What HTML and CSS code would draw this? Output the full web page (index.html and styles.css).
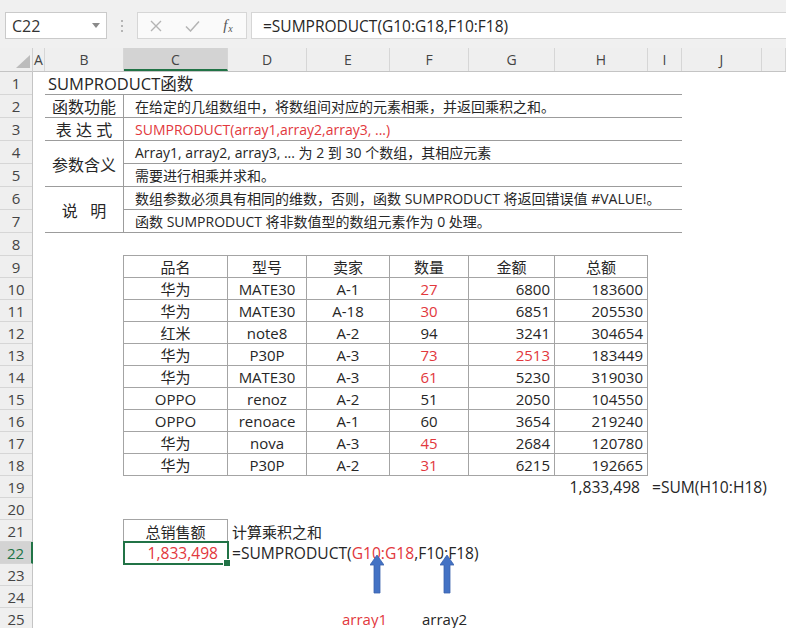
FILE: index.html
```html
<!DOCTYPE html>
<html lang="zh">
<head>
<meta charset="utf-8">
<title>SUMPRODUCT</title>
<link rel="stylesheet" href="styles.css">
</head>
<body>
<header class="topbar">
  <div class="namebox"><span>C22</span><svg class="caret" width="8" height="5" viewBox="0 0 8 5"><path d="M0 0H8L4 5Z" fill="#8a8a8a"/></svg></div>
  <div class="grip"><i></i><i></i><i></i></div>
  <div class="fxbox">
    <span class="slot"><svg width="12" height="12" viewBox="0 0 12 12"><path d="M1 1L11 11M11 1L1 11" stroke="#b4b4b4" stroke-width="1.4" fill="none"/></svg></span>
    <span class="slot"><svg width="15" height="12" viewBox="0 0 15 12"><path d="M1 6.5L5.5 11L14 1.5" stroke="#b4b4b4" stroke-width="1.5" fill="none"/></svg></span>
    <span class="slot fx"><i>f</i><small>x</small></span>
  </div>
  <div class="formula">=SUMPRODUCT(G10:G18,F10:F18)</div>
</header>

<main class="sheet">
  <div class="corner"><svg width="14" height="13" viewBox="0 0 14 13"><path d="M14 0V13H0Z" fill="#bcbcbc"/></svg></div>
  <div class="colheads">
    <div class="ch">A</div><div class="ch">B</div><div class="ch sel">C</div><div class="ch">D</div><div class="ch">E</div><div class="ch">F</div><div class="ch">G</div><div class="ch">H</div><div class="ch">I</div><div class="ch">J</div><div class="ch"></div>
  </div>
  <div class="rowheads">
    <div class="rh">1</div><div class="rh">2</div><div class="rh">3</div><div class="rh">4</div><div class="rh">5</div><div class="rh">6</div><div class="rh">7</div><div class="rh">8</div><div class="rh">9</div><div class="rh">10</div><div class="rh">11</div><div class="rh">12</div><div class="rh">13</div><div class="rh">14</div><div class="rh">15</div><div class="rh">16</div><div class="rh">17</div><div class="rh">18</div><div class="rh">19</div><div class="rh">20</div><div class="rh">21</div><div class="rh sel">22</div><div class="rh">23</div><div class="rh">24</div><div class="rh">25</div>
  </div>
  <div class="cells">
    <div class="title">SUMPRODUCT函数</div>
    <div class="info">
      <div class="lbl">函数功能</div><div class="txt">在给定的几组数组中，将数组间对应的元素相乘，并返回乘积之和。</div>
      <div class="lbl">表 达 式</div><div class="txt red">SUMPRODUCT(array1,array2,array3, ...)</div>
      <div class="lbl span2">参数含义</div><div class="txt">Array1, array2, array3, ... 为 2 到 30 个数组，其相应元素</div><div class="txt">需要进行相乘并求和。</div>
      <div class="lbl span2">说&nbsp;&nbsp;&nbsp;明</div><div class="txt">数组参数必须具有相同的维数，否则，函数 SUMPRODUCT 将返回错误值 #VALUE!。</div><div class="txt">函数 SUMPRODUCT 将非数值型的数组元素作为 0 处理。</div>
    </div>
    <div class="table">
      <div class="td">品名</div><div class="td">型号</div><div class="td">卖家</div><div class="td">数量</div><div class="td">金额</div><div class="td">总额</div>
      <div class="td">华为</div><div class="td">MATE30</div><div class="td">A-1</div><div class="td red">27</div><div class="td num">6800</div><div class="td num">183600</div>
      <div class="td">华为</div><div class="td">MATE30</div><div class="td">A-18</div><div class="td red">30</div><div class="td num">6851</div><div class="td num">205530</div>
      <div class="td">红米</div><div class="td">note8</div><div class="td">A-2</div><div class="td">94</div><div class="td num">3241</div><div class="td num">304654</div>
      <div class="td">华为</div><div class="td">P30P</div><div class="td">A-3</div><div class="td red">73</div><div class="td num red">2513</div><div class="td num">183449</div>
      <div class="td">华为</div><div class="td">MATE30</div><div class="td">A-3</div><div class="td red">61</div><div class="td num">5230</div><div class="td num">319030</div>
      <div class="td">OPPO</div><div class="td">renoz</div><div class="td">A-2</div><div class="td">51</div><div class="td num">2050</div><div class="td num">104550</div>
      <div class="td">OPPO</div><div class="td">renoace</div><div class="td">A-1</div><div class="td">60</div><div class="td num">3654</div><div class="td num">219240</div>
      <div class="td">华为</div><div class="td">nova</div><div class="td">A-3</div><div class="td red">45</div><div class="td num">2684</div><div class="td num">120780</div>
      <div class="td">华为</div><div class="td">P30P</div><div class="td">A-2</div><div class="td red">31</div><div class="td num">6215</div><div class="td num">192665</div>
    </div>
    <div class="cell latin total">1,833,498</div>
    <div class="cell latin totalf">=SUM(H10:H18)</div>
    <div class="cell boxhead">总销售额</div>
    <div class="cell note">计算乘积之和</div>
    <div class="cell latin selcell">1,833,498</div>
    <div class="cell latin fformula">=SUMPRODUCT(<span class="red">G10:G18</span>,F10:F18)</div>
    <svg class="arrow arrow1" width="14" height="39" viewBox="0 0 14 39"><path d="M7 0L14 10H10V38H4V10H0Z" fill="#4472c4" stroke="#3a63ad" stroke-width="0.8"/></svg>
    <svg class="arrow arrow2" width="14" height="39" viewBox="0 0 14 39"><path d="M7 0L14 10H10V38H4V10H0Z" fill="#4472c4" stroke="#3a63ad" stroke-width="0.8"/></svg>
    <div class="cell alabel1 red">array1</div>
    <div class="cell alabel2">array2</div>
  </div>
</main>
</body>
</html>
```
FILE: styles.css
```css
* { box-sizing: border-box; }
html, body { margin: 0; padding: 0; }
body {
  width: 786px;
  height: 628px;
  overflow: hidden;
  background: #fff;
  color: #262626;
  font-family: "Open Sans", "Noto Sans CJK SC", sans-serif;
}
.red { color: #e2383d; }

/* formula bar */
.topbar {
  display: flex;
  align-items: flex-start;
  height: 48px;
  padding-top: 12px;
  background: #f0f0f0;
}
.namebox {
  margin-left: 5px;
  width: 102px;
  height: 27px;
  background: #fff;
  border: 1px solid #cacaca;
  display: flex;
  align-items: center;
  justify-content: space-between;
  padding: 0 6px 0 6px;
  font-size: 16px;
  color: #333;
}
.grip {
  width: 30px;
  height: 27px;
  display: flex;
  flex-direction: column;
  align-items: center;
  justify-content: center;
  gap: 3px;
}
.grip i { width: 2px; height: 2px; background: #b5b5b5; }
.fxbox {
  width: 110px;
  height: 27px;
  background: #fafafa;
  border: 1px solid #d6d6d6;
  display: flex;
  align-items: center;
}
.slot {
  width: 36px;
  height: 25px;
  display: flex;
  align-items: center;
  justify-content: center;
}
.slot.fx { width: 36px; font-family: "Liberation Serif", serif; color: #555; font-size: 15px; }
.fx small { font-size: 10px; font-style: italic; margin-top: 5px; margin-left: 1px; }
.formula {
  flex: 1;
  margin-left: 4px;
  height: 27px;
  background: #fff;
  border: 1px solid #d6d6d6;
  border-right: none;
  padding-left: 11px;
  font-size: 15.5px;
  display: flex;
  align-items: center;
  white-space: nowrap;
}

/* sheet */
.sheet {
  --cols: 12px 79px 104px 79px 83px 79px 86px 93px 34px 80px 1fr;
  --rows: repeat(8, 23px) repeat(17, 22px);
  display: grid;
  grid-template-columns: 33px 1fr;
  grid-template-rows: 24px auto;
}
.corner {
  background: #efefef;
  border-right: 1px solid #d0d0d0;
  border-bottom: 1px solid #c4c4c4;
  display: flex;
  align-items: flex-end;
  justify-content: flex-end;
  padding: 0 2px 3px 0;
}
.colheads {
  display: grid;
  grid-template-columns: var(--cols);
  background: #efefef;
  border-bottom: 1px solid #c4c4c4;
}
.ch {
  border-right: 1px solid #d6d6d6;
  display: flex;
  align-items: center;
  justify-content: center;
  font-size: 14px;
  color: #444;
}
.ch.sel {
  background: #d3d3d3;
  border-bottom: 2px solid #217346;
  padding-top: 2px;
}
.rowheads {
  display: grid;
  grid-template-rows: var(--rows);
  background: #efefef;
  border-right: 1px solid #c4c4c4;
}
.rh {
  border-bottom: 1px solid #d6d6d6;
  display: flex;
  align-items: center;
  justify-content: center;
  font-size: 15px;
  color: #444;
}
.rh.sel {
  background: #d3d3d3;
  color: #217346;
  margin-right: -1px;
  border-right: 2px solid #217346;
}

.cells {
  display: grid;
  grid-template-columns: var(--cols);
  grid-template-rows: var(--rows);
  white-space: nowrap;
}
.cell {
  display: flex;
  align-items: center;
  font-size: 15px;
  min-width: 0;
}
.cell.latin { font-size: 15.6px; }

.title {
  grid-row: 1;
  grid-column: 2 / 10;
  border-bottom: 1px solid #9c9c9c;
  padding-left: 3px;
  font-size: 16.5px;
  display: flex;
  align-items: center;
}
.info {
  grid-row: 2 / 8;
  grid-column: 2 / 10;
  display: grid;
  grid-template-columns: 79px 1fr;
  grid-template-rows: repeat(6, 23px);
}
.lbl {
  grid-column: 1;
  border-right: 1px solid #9c9c9c;
  border-bottom: 1px solid #9c9c9c;
  display: flex;
  align-items: center;
  justify-content: center;
  font-size: 16px;
}
.lbl.span2 { grid-row: span 2; }
.txt {
  grid-column: 2;
  border-bottom: 1px solid #9c9c9c;
  display: flex;
  align-items: center;
  padding-left: 11px;
  font-size: 14px;
}

.table {
  grid-row: 9 / 19;
  grid-column: 3 / 9;
  display: grid;
  grid-template-columns: 104px 79px 83px 79px 86px 93px;
  grid-template-rows: repeat(10, 22px);
  border-top: 1px solid #a4a4a4;
  border-left: 1px solid #a4a4a4;
  margin-left: -1px;
  margin-top: -1px;
}
.td {
  border-right: 1px solid #a4a4a4;
  border-bottom: 1px solid #a4a4a4;
  display: flex;
  align-items: center;
  justify-content: center;
  font-size: 15px;
}
.td.num { justify-content: flex-end; padding-right: 4px; }

.total { grid-row: 19; grid-column: 8; justify-content: flex-end; padding-right: 8px; }
.totalf { grid-row: 19; grid-column: 9; padding-left: 4px; }
.boxhead {
  grid-row: 21;
  grid-column: 3;
  justify-content: center;
  border: 1px solid #a4a4a4;
  border-bottom: none;
  margin-left: -1px;
  margin-top: -1px;
}
.note { grid-row: 21; grid-column: 4; padding-left: 4px; }
.selcell {
  grid-row: 22;
  grid-column: 3;
  position: relative;
  justify-content: flex-end;
  padding-right: 9px;
  margin: -1px;
  border: 2px solid #217346;
  color: #e2383d;
}
.selcell::after {
  content: "";
  position: absolute;
  right: -4px;
  bottom: -4px;
  width: 6px;
  height: 6px;
  background: #217346;
  border: 1px solid #fff;
}
.fformula { grid-row: 22; grid-column: 4; padding-left: 4px; }
.arrow { grid-row: 22 / 25; align-self: start; margin-top: 13px; }
.arrow1 { grid-column: 5; margin-left: 63px; }
.arrow2 { grid-column: 6; margin-left: 50px; }
.alabel1 { grid-row: 25; grid-column: 5; padding-left: 35px; }
.alabel2 { grid-row: 25; grid-column: 6; padding-left: 32px; }
```
